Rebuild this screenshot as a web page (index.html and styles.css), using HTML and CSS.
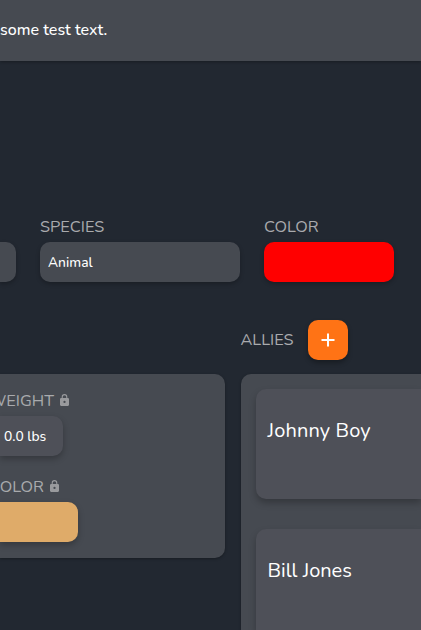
FILE: index.html
```html
<!DOCTYPE html>
<html lang="en">
<head>
<meta charset="utf-8">
<title>Character</title>
<link rel="stylesheet" href="styles.css">
</head>
<body>
<header class="banner"><span>some test text.</span></header>
<main>
  <section class="fields">
    <div class="input clipped"></div>
    <div class="field species"><div class="label"><span>SPECIES</span></div><div class="input"><span>Animal</span></div></div>
    <div class="field color"><div class="label"><span>COLOR</span></div><div class="input red"></div></div>
  </section>
  <section class="columns">
    <div class="panel stats">
      <div class="label weight-label"><span>WEIGHT</span><svg class="lock" viewBox="4 1 16 21"><path fill-rule="evenodd" d="M18 8h-1V6A5 5 0 0 0 7 6v2H6a2 2 0 0 0-2 2v10a2 2 0 0 0 2 2h12a2 2 0 0 0 2-2V10a2 2 0 0 0-2-2ZM12 17a2 2 0 1 1 0-4 2 2 0 0 1 0 4ZM15.1 8H8.9V6a3.1 3.1 0 0 1 6.2 0Z"/></svg></div>
      <div class="input weight"><span>0.0 lbs</span></div>
      <div class="label color-label"><span>COLOR</span><svg class="lock" viewBox="4 1 16 21"><path fill-rule="evenodd" d="M18 8h-1V6A5 5 0 0 0 7 6v2H6a2 2 0 0 0-2 2v10a2 2 0 0 0 2 2h12a2 2 0 0 0 2-2V10a2 2 0 0 0-2-2ZM12 17a2 2 0 1 1 0-4 2 2 0 0 1 0 4ZM15.1 8H8.9V6a3.1 3.1 0 0 1 6.2 0Z"/></svg></div>
      <div class="input tan"></div>
    </div>
    <div class="allies">
      <div class="allies-head"><div class="label"><span>ALLIES</span></div><div class="add"><svg viewBox="0 0 14 14"><path d="M7 .5v13M.5 7h13"/></svg></div></div>
      <div class="panel list">
        <div class="card"><span class="wide">Johnny Boy</span></div>
        <div class="card last"><span>Bill Jones</span></div>
      </div>
    </div>
  </section>
</main>
</body>
</html>
```

FILE: styles.css
```css
* { box-sizing: border-box; }
html, body { height: 630px; overflow: hidden; }
body { margin: 0; background: #222831; color: #fff; font-family: Nunito, Lato, "Open Sans", sans-serif; }
span { white-space: nowrap; }
.banner { height: 61px; padding-bottom: 1px; display: flex; align-items: center; background: #464a51; font-size: 16px; font-weight: 500; box-shadow: 0 1px 3px rgba(0,0,0,.3); }
.fields { display: flex; align-items: flex-end; gap: 24px; padding-top: 154px; }
.label { height: 24px; line-height: 24px; font-size: 16.3px; color: #a9aaad; display: flex; align-items: center; }
.field .label { margin-bottom: 3px; }
.input { height: 40px; border-radius: 10px; background: #464a51; box-shadow: 0 2px 4px rgba(0,0,0,.25); display: flex; align-items: center; font-size: 13.8px; font-weight: 500; }
.clipped { width: 16px; border-radius: 0 10px 10px 0; }
.species { width: 200px; }
.species .input { padding-left: 8px; }
.color { width: 130px; }
.red { background: #f00; }
.columns { display: flex; align-items: flex-start; gap: 16px; padding-top: 38px; }
.panel { background: #464a51; box-shadow: 0 1px 3px rgba(0,0,0,.3); }
.stats { width: 224.5px; height: 184px; margin-top: 54px; padding-top: 14px; border-radius: 0 10px 10px 0; flex: none; overflow: hidden; }
.weight-label { width: 69px; justify-content: flex-end; gap: 6px; }
.color-label { width: 59px; justify-content: flex-end; gap: 6px; margin-top: 18px; }
.label span { position: relative; }
.stats .label span { top: 1px; }
.lock { width: 9px; height: 12px; fill: #999a9d; flex: none; }
.weight { width: 63px; margin-top: 4px; padding-left: 4px; background: #4e5058; border-radius: 0 10px 10px 0; box-shadow: 0 3px 6px rgba(0,0,0,.25); }
.tan { width: 78px; margin-top: 4px; background: #dfab69; border-radius: 0 10px 10px 0; box-shadow: 0 3px 6px rgba(0,0,0,.25); }
.allies { width: 180.5px; flex: none; }
.allies-head { display: flex; align-items: center; height: 40px; }
.allies-head .label { width: 67px; }
.add { width: 40px; height: 40px; border-radius: 10px; background: #ff7315; display: flex; align-items: center; justify-content: center; box-shadow: 0 3px 5px rgba(0,0,0,.3); }
.add svg { width: 14px; height: 14px; fill: none; stroke: #fff; stroke-width: 2; }
.list { margin-top: 14px; height: 256px; padding: 15px 0 0 15px; border-radius: 10px 0 0 0; overflow: hidden; }
.card { height: 110px; margin-bottom: 30px; padding: 28px 12px; border-radius: 10px 0 0 10px; background: #4e5058; box-shadow: 0 4px 7px rgba(0,0,0,.25); font-size: 20px; line-height: 28px; }
.card.last { height: 101px; margin-bottom: 0; border-radius: 10px 0 0 0; }
.card .wide { letter-spacing: .15px; }
```
